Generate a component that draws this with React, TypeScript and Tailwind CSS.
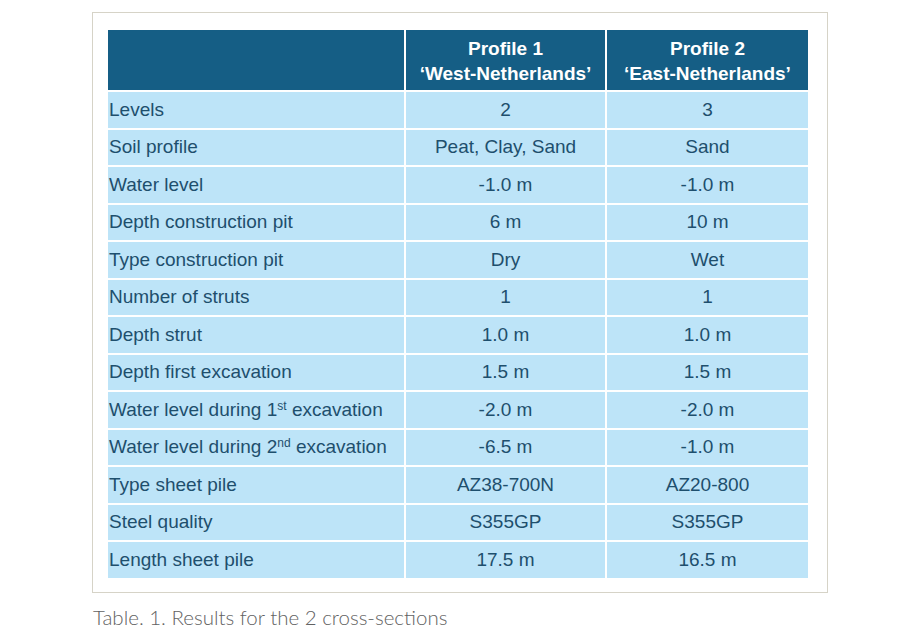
import React from "react";

type Row = { label: React.ReactNode; a: string; b: string };

const rows: Row[] = [
  { label: "Levels", a: "2", b: "3" },
  { label: "Soil profile", a: "Peat, Clay, Sand", b: "Sand" },
  { label: "Water level", a: "-1.0 m", b: "-1.0 m" },
  { label: "Depth construction pit", a: "6 m", b: "10 m" },
  { label: "Type construction pit", a: "Dry", b: "Wet" },
  { label: "Number of struts", a: "1", b: "1" },
  { label: "Depth strut", a: "1.0 m", b: "1.0 m" },
  { label: "Depth first excavation", a: "1.5 m", b: "1.5 m" },
  {
    label: (
      <span>
        Water level during 1<sup className="text-[12px] relative -top-[6px]">st</sup> excavation
      </span>
    ),
    a: "-2.0 m",
    b: "-2.0 m",
  },
  {
    label: (
      <span>
        Water level during 2<sup className="text-[12px] relative -top-[6px]">nd</sup> excavation
      </span>
    ),
    a: "-6.5 m",
    b: "-1.0 m",
  },
  { label: "Type sheet pile", a: "AZ38-700N", b: "AZ20-800" },
  { label: "Steel quality", a: "S355GP", b: "S355GP" },
  { label: "Length sheet pile", a: "17.5 m", b: "16.5 m" },
];

export default function App() {
  return (
    <div className="w-[920px] h-[640px] bg-white relative overflow-hidden">
      <div className="pt-[12px] pl-[92px]">
        <div className="w-[736px] h-[581px] border-[1.5px] border-[#d6d3c7] pt-[17px] pl-[15px]">
          <div
            className="w-[700px] grid grid-cols-[296px_199px_201px] gap-x-[2px] gap-y-[2px] text-[19px] text-[#1e4f6d]"
            style={{ fontFamily: '"Liberation Sans", Arial, sans-serif' }}
          >
            <div className="bg-white h-[60px] col-span-3 grid grid-cols-[296px_199px_201px] gap-x-[2px]">
              <div className="bg-[#155e85]" />
              <div className="bg-[#155e85] flex flex-col items-center justify-center text-white font-bold leading-[25px] pt-[1px]">
                <span>Profile 1</span>
                <span>‘West-Netherlands’</span>
              </div>
              <div className="bg-[#155e85] flex flex-col items-center justify-center text-white font-bold leading-[25px] pt-[1px]">
                <span>Profile 2</span>
                <span>‘East-Netherlands’</span>
              </div>
            </div>
            {rows.map((r, i) => (
              <React.Fragment key={i}>
                <div className="bg-[#bde4f8] h-[35.5px] flex items-center pl-[1px] whitespace-nowrap">
                  {r.label}
                </div>
                <div className="bg-[#bde4f8] h-[35.5px] flex items-center justify-center">{r.a}</div>
                <div className="bg-[#bde4f8] h-[35.5px] flex items-center justify-center">{r.b}</div>
              </React.Fragment>
            ))}
          </div>
        </div>
      </div>
      <div
        className="pl-[93px] pt-[10px] text-[20.5px] font-light text-[#626262] leading-[28px]"
        style={{ fontFamily: 'Lato, "Open Sans", sans-serif' }}
      >
        Table. 1. Results for the 2 cross-sections
      </div>
    </div>
  );
}
